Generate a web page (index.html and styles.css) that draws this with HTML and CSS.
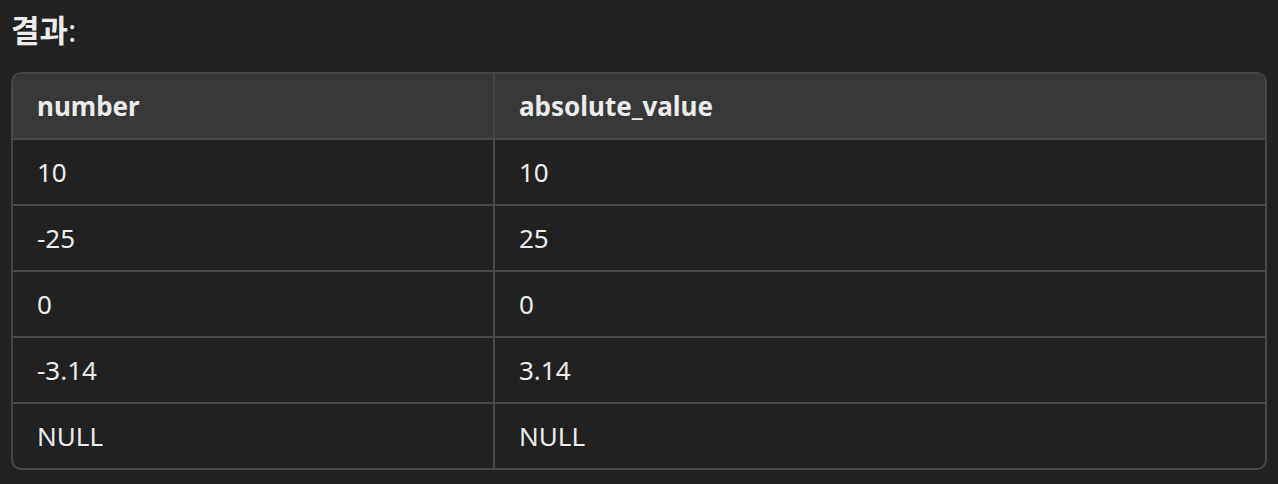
FILE: index.html
```html
<!DOCTYPE html>
<html lang="ko">
<head>
<meta charset="utf-8">
<link rel="stylesheet" href="styles.css">
</head>
<body>
<div class="page">
  <h3 class="title"><strong>결과</strong>:</h3>
  <div class="table-wrap">
    <table class="result">
      <thead>
        <tr><th>number</th><th>absolute_value</th></tr>
      </thead>
      <tbody>
        <tr><td>10</td><td>10</td></tr>
        <tr><td>-25</td><td>25</td></tr>
        <tr><td>0</td><td>0</td></tr>
        <tr><td>-3.14</td><td>3.14</td></tr>
        <tr><td>NULL</td><td>NULL</td></tr>
      </tbody>
    </table>
  </div>
</div>
</body>
</html>
```

FILE: styles.css
```css
html, body {
  margin: 0;
  padding: 0;
  background: #212121;
}
body {
  font-family: "Noto Sans", "Noto Sans CJK KR", sans-serif;
  color: #ececec;
}
.page {
  padding: 8px 11px 0 11px;
}
.title {
  margin: 0;
  font-size: 31px;
  line-height: 44px;
  font-weight: 400;
  height: 64px;
}
.title strong {
  font-weight: 700;
}
.table-wrap {
  border: 2px solid #474747;
  border-radius: 10px;
  overflow: hidden;
}
.result {
  width: 100%;
  border-collapse: collapse;
  font-size: 26px;
}
.result th, .result td {
  text-align: left;
  padding: 0 24px;
  height: 64px;
  border-bottom: 2px solid #474747;
}
.result th + th, .result td + td {
  border-left: 2px solid #474747;
}
.result th {
  background: #383838;
  font-weight: 700;
}
.result tbody tr:last-child td {
  border-bottom: none;
}
.result th:first-child, .result td:first-child {
  width: 432px;
}
```
